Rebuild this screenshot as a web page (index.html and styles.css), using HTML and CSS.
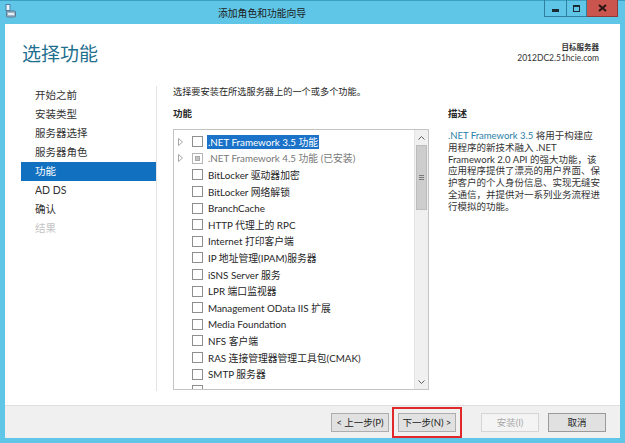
FILE: index.html
```html
<!DOCTYPE html>
<html lang="zh-CN">
<head>
    <meta charset="UTF-8">
    <title>添加角色和功能向导</title>
    <link rel="stylesheet" href="styles.css">
</head>
<body>
    <div class="window">
        <div class="titlebar">
            <svg class="app-icon" width="12" height="14" viewBox="0 0 12 14">
                <rect x="1" y="0.5" width="4" height="6" fill="#eaf4fb" stroke="#4a7fa8" stroke-width="1"/>
                <rect x="1.5" y="7" width="9" height="6" rx="1" fill="#9bb4c8" stroke="#587a94" stroke-width="1"/>
                <rect x="3" y="9" width="6" height="2" fill="#e8eef3"/>
            </svg>
            <div class="title">添加角色和功能向导</div>
            <div class="win-buttons">
                <div class="wbtn min"><span></span></div>
                <div class="wbtn max"><span></span></div>
                <div class="wbtn close">
                    <svg width="9" height="8" viewBox="0 0 9 8"><path d="M1 1 L8 7 M8 1 L1 7" stroke="#2a1414" stroke-width="2"/></svg>
                </div>
            </div>
        </div>

        <div class="client">
            <div class="header">
                <h1>选择功能</h1>
                <div class="server">
                    <div class="server-label">目标服务器</div>
                    <div>2012DC2.51hcie.com</div>
                </div>
            </div>

            <div class="main">
                <ul class="nav">
                    <li>开始之前</li>
                    <li>安装类型</li>
                    <li>服务器选择</li>
                    <li>服务器角色</li>
                    <li class="active">功能</li>
                    <li>AD DS</li>
                    <li>确认</li>
                    <li class="disabled">结果</li>
                </ul>

                <div class="content">
                    <p class="intro">选择要安装在所选服务器上的一个或多个功能。</p>
                    <div class="cols">
                        <div class="features">
                            <div class="heading">功能</div>
                            <div class="listbox">
                                <div class="items">
                                    <div class="row">
                                        <span class="exp"><svg width="5" height="8" viewBox="0 0 5 8"><path d="M0.5 0.5 L4.5 4 L0.5 7.5 Z" fill="none" stroke="#a8a8a8"/></svg></span>
                                        <span class="chk"></span>
                                        <span class="label selected">.NET Framework 3.5 功能</span>
                                    </div>
                                    <div class="row installed">
                                        <span class="exp"><svg width="5" height="8" viewBox="0 0 5 8"><path d="M0.5 0.5 L4.5 4 L0.5 7.5 Z" fill="none" stroke="#a8a8a8"/></svg></span>
                                        <span class="chk partial"><i></i></span>
                                        <span class="label">.NET Framework 4.5 功能 (已安装)</span>
                                    </div>
                                    <div class="row"><span class="exp"></span><span class="chk"></span><span class="label">BitLocker 驱动器加密</span></div>
                                    <div class="row"><span class="exp"></span><span class="chk"></span><span class="label">BitLocker 网络解锁</span></div>
                                    <div class="row"><span class="exp"></span><span class="chk"></span><span class="label">BranchCache</span></div>
                                    <div class="row"><span class="exp"></span><span class="chk"></span><span class="label">HTTP 代理上的 RPC</span></div>
                                    <div class="row"><span class="exp"></span><span class="chk"></span><span class="label">Internet 打印客户端</span></div>
                                    <div class="row"><span class="exp"></span><span class="chk"></span><span class="label">IP 地址管理(IPAM)服务器</span></div>
                                    <div class="row"><span class="exp"></span><span class="chk"></span><span class="label">iSNS Server 服务</span></div>
                                    <div class="row"><span class="exp"></span><span class="chk"></span><span class="label">LPR 端口监视器</span></div>
                                    <div class="row"><span class="exp"></span><span class="chk"></span><span class="label">Management OData IIS 扩展</span></div>
                                    <div class="row"><span class="exp"></span><span class="chk"></span><span class="label">Media Foundation</span></div>
                                    <div class="row"><span class="exp"></span><span class="chk"></span><span class="label">NFS 客户端</span></div>
                                    <div class="row"><span class="exp"></span><span class="chk"></span><span class="label">RAS 连接管理器管理工具包(CMAK)</span></div>
                                    <div class="row"><span class="exp"></span><span class="chk"></span><span class="label">SMTP 服务器</span></div>
                                    <div class="row"><span class="exp"></span><span class="chk"></span></div>
                                </div>
                                <div class="scrollbar">
                                    <div class="arrow">
                                        <svg width="7" height="4" viewBox="0 0 7 4"><path d="M0.5 3.5 L3.5 0.5 L6.5 3.5" fill="none" stroke="#606060"/></svg>
                                    </div>
                                    <div class="thumb"><span></span><span></span><span></span></div>
                                    <div class="track"></div>
                                    <div class="arrow">
                                        <svg width="7" height="4" viewBox="0 0 7 4"><path d="M0.5 0.5 L3.5 3.5 L6.5 0.5" fill="none" stroke="#606060"/></svg>
                                    </div>
                                </div>
                            </div>
                        </div>

                        <div class="desc">
                            <div class="heading">描述</div>
                            <p class="desc-text"><span class="link">.NET Framework 3.5</span> 将用于构建应<br>用程序的新技术融入 .NET<br>Framework 2.0 API 的强大功能，该<br>应用程序提供了漂亮的用户界面、保<br>护客户的个人身份信息、实现无缝安<br>全通信，并提供对一系列业务流程进<br>行模拟的功能。</p>
                        </div>
                    </div>
                </div>
            </div>

            <div class="footer">
                <button class="btn">&lt; 上一步(P)</button>
                <button class="btn next">下一步(N) &gt;</button>
                <button class="btn install" disabled>安装(I)</button>
                <button class="btn cancel">取消</button>
            </div>
        </div>
    </div>
</body>
</html>
```

FILE: styles.css
```css
body {
    margin: 0;
    font-family: Lato, "Noto Sans CJK SC", sans-serif;
    color: #262626;
}
.window {
    width: 625px;
    height: 443px;
    background: #60c6e7;
    border-top: 1px solid #3d9fc2;
    box-sizing: border-box;
    display: flex;
    flex-direction: column;
}
.titlebar {
    height: 23px;
    display: flex;
    position: relative;
}
.app-icon {
    margin: 3px 0 0 5px;
}
.title {
    position: absolute;
    left: 218px;
    top: 6px;
    font-size: 9.8px;
    line-height: 12px;
    color: #1c1c1c;
}
.win-buttons {
    margin-left: auto;
    margin-right: 7px;
    display: flex;
    height: 17px;
    margin-top: -1px;
}
.wbtn {
    border: 1px solid #2f7f9e;
    border-top: none;
    display: flex;
    align-items: center;
    justify-content: center;
    box-sizing: border-box;
    height: 17px;
}
.min { width: 23px; }
.max { width: 20px; border-left: none; }
.close { width: 31px; border-left: none; background: #c9554e; border-color: #8f3a36; }
.min span {
    width: 7px;
    height: 3px;
    background: #1b2b33;
    margin-top: 4px;
}
.max span {
    width: 5px;
    height: 4px;
    border: 1.5px solid #1b2b33;
    border-top-width: 2.5px;
}
.client {
    flex: 1;
    margin: 0 5px 5px 5px;
    background: #fff;
    display: flex;
    flex-direction: column;
}
.header {
    height: 62px;
    box-sizing: border-box;
    display: flex;
    justify-content: space-between;
    padding: 0 21px 0 17px;
}
h1 {
    margin: 0;
    padding-top: 18px;
    font-size: 19px;
    line-height: 24px;
    font-weight: 400;
    color: #1f6f8e;
}
.server {
    padding-top: 18px;
    text-align: right;
    font-size: 8.5px;
    line-height: 11px;
    color: #333;
}
.server-label {
    font-weight: 700;
    font-size: 7.5px;
}
.main {
    flex: 1;
    display: flex;
    padding-left: 16px;
}
.nav {
    list-style: none;
    margin: 0 0 14px 0;
    padding: 0;
    width: 135px;
    border-right: 1px solid #e4e4e4;
    font-size: 10.5px;
}
.nav li {
    height: 19px;
    line-height: 19px;
    padding-left: 14px;
    color: #333;
}
.nav li.active {
    background: #1170c0;
    color: #fff;
}
.nav li.disabled {
    color: #c4c4c4;
}
.content {
    flex: 1;
    padding-left: 16px;
}
.intro {
    margin: 0;
    font-size: 9.2px;
    line-height: 12px;
}
.cols {
    display: flex;
    margin-top: 9px;
}
.heading {
    font-size: 9.5px;
    font-weight: 700;
    line-height: 14px;
}
.features {
    width: 256px;
}
.listbox {
    margin-top: 8px;
    height: 261px;
    box-sizing: border-box;
    border: 1px solid #c4c4c4;
    display: flex;
}
.items {
    flex: 1;
    overflow: hidden;
    padding-top: 3.5px;
}
.row {
    height: 16.6px;
    display: flex;
    align-items: center;
    font-size: 9.8px;
    white-space: nowrap;
}
.exp {
    width: 18px;
    padding-left: 4px;
    box-sizing: border-box;
    display: flex;
    align-items: center;
}
.chk {
    width: 11px;
    height: 11px;
    box-sizing: border-box;
    border: 1px solid #8e8e8e;
    margin-right: 4px;
    display: flex;
    align-items: center;
    justify-content: center;
}
.chk.partial {
    border-color: #b6b6b6;
}
.chk.partial i {
    width: 5px;
    height: 5px;
    background: #c3c3c3;
    border: 1px solid #a9a9a9;
    box-sizing: border-box;
}
.label {
    padding: 1px 1px;
    line-height: 12px;
}
.label.selected {
    background: #1a73c9;
    color: #fff;
}
.installed .label {
    color: #777;
}
.scrollbar {
    width: 13px;
    background: #f0f0f0;
    border-left: 1px solid #e4e4e4;
    display: flex;
    flex-direction: column;
}
.arrow {
    height: 15px;
    display: flex;
    align-items: center;
    justify-content: center;
}
.thumb {
    height: 63px;
    margin: 0 1px;
    background: #cdcdcd;
    border: 1px solid #bcbcbc;
    display: flex;
    flex-direction: column;
    align-items: center;
    justify-content: center;
    gap: 1px;
}
.thumb span {
    width: 5px;
    height: 1px;
    background: #7a7a7a;
}
.track {
    flex: 1;
}
.desc {
    margin-left: 19px;
    width: 160px;
}
.desc-text {
    margin: 9px 0 0 0;
    font-size: 9.5px;
    line-height: 11.8px;
    color: #333;
}
.link {
    color: #2a7fa9;
}
.footer {
    height: 33px;
    box-sizing: border-box;
    background: #f0f0f0;
    border-top: 1px solid #dedede;
    display: flex;
    align-items: center;
    justify-content: flex-end;
    padding-right: 14px;
}
.btn {
    width: 58px;
    height: 19px;
    margin-left: 9px;
    padding: 0;
    font-family: Lato, "Noto Sans CJK SC", sans-serif;
    font-size: 9.5px;
    color: #222;
    background: #e1e1e1;
    border: 1px solid #adadad;
}
.next {
    outline: 2px solid #e0282a;
    outline-offset: 4px;
}
.install {
    margin-left: 25px;
    background: #f4f4f4;
    border-color: #d5d5d5;
    color: #a8a8a8;
}
.cancel {
    border-color: #9a9a9a;
}
```
